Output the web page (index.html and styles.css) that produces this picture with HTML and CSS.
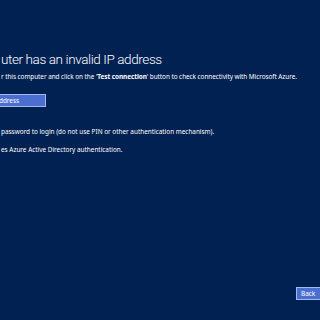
FILE: index.html
```html
<!DOCTYPE html>
<html lang="en">
<head>
    <meta charset="UTF-8">
    <title>Invalid IP address</title>
    <link rel="stylesheet" href="styles.css">
</head>
<body>
    <div class="page">
        <h1 class="title">uter has an invalid IP address</h1>
        <p class="intro">r this computer and click on the '<b>Test connection</b>' button to check connectivity with Microsoft Azure.</p>
        <button class="btn btn-wide">ddress</button>
        <p class="note first">password to login (do not use PIN or other authentication mechanism).</p>
        <p class="note">es Azure Active Directory authentication.</p>
        <div class="footer">
            <button class="btn btn-back">Back</button>
        </div>
    </div>
</body>
</html>
```

FILE: styles.css
```css
html, body {
    margin: 0;
    height: 100%;
    background-color: #002152;
    overflow: hidden;
}
.page {
    position: relative;
    height: 320px;
    padding: 0 0 0 1px;
    font-family: "Noto Sans", sans-serif;
    color: #fff;
}
.title {
    margin: 0;
    padding-top: 49px;
    font-family: Roboto, sans-serif;
    font-size: 13.5px;
    font-weight: 300;
    letter-spacing: -0.4px;
    line-height: 20px;
}
.intro {
    margin: 4px 0 0;
    font-size: 6.4px;
    line-height: 8px;
    letter-spacing: -0.05px;
}
.btn {
    font-family: "Noto Sans", sans-serif;
    font-size: 6.4px;
    color: #fff;
    background-color: #4b6fd1;
    border: 1px solid #a5b8ec;
    padding: 0 4px;
    height: 13px;
    text-align: left;
}
.btn-wide {
    display: block;
    margin: 13px 0 0 -7px;
    width: 52px;
}
.note {
    margin: 0;
    font-size: 6.4px;
    line-height: 8px;
}
.note.first {
    margin-top: 21px;
}
.note + .note {
    margin-top: 10px;
}
.footer {
    position: absolute;
    right: -16px;
    top: 279px;
}
.btn-back {
    width: 40px;
}
```
